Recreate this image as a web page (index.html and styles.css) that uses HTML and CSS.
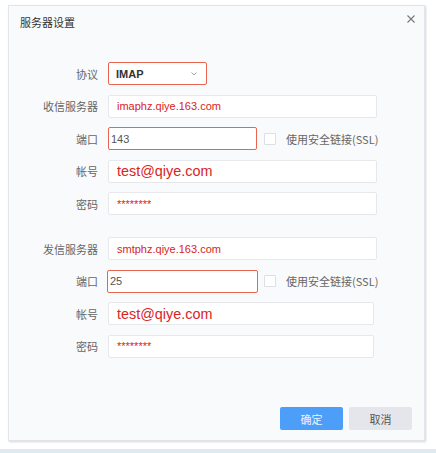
FILE: index.html
```html
<!DOCTYPE html>
<html lang="zh-CN">
<head>
<meta charset="utf-8">
<title>服务器设置</title>
<link rel="stylesheet" href="styles.css">
</head>
<body>
<div class="dialog">
  <div class="dialog-header">
    <span class="dialog-title">服务器设置</span>
    <svg class="close" width="8" height="8" viewBox="0 0 8 8"><path d="M0.5 0.5L7.5 7.5M7.5 0.5L0.5 7.5" stroke="#777" stroke-width="1.1" fill="none"/></svg>
  </div>
  <div class="form">
    <div class="group">
      <div class="row">
        <span class="label">协议</span>
        <div class="select">
          <span class="select-value">IMAP</span>
          <svg class="chevron" width="6" height="4" viewBox="0 0 6 4"><path d="M0.5 0.5L3 3L5.5 0.5" stroke="#999" stroke-width="0.9" fill="none"/></svg>
        </div>
      </div>
      <div class="row">
        <span class="label">收信服务器</span>
        <div class="input wide red-text">imaphz.qiye.163.com</div>
      </div>
      <div class="row">
        <span class="label">端口</span>
        <div class="input port error">143</div>
        <span class="checkbox"></span>
        <span class="check-label">使用安全链接(SSL)</span>
      </div>
      <div class="row">
        <span class="label">帐号</span>
        <div class="input wide red-text big">test@qiye.com</div>
      </div>
      <div class="row">
        <span class="label">密码</span>
        <div class="input wide red-text">********</div>
      </div>
    </div>
    <div class="group">
      <div class="row">
        <span class="label">发信服务器</span>
        <div class="input wide red-text">smtphz.qiye.163.com</div>
      </div>
      <div class="row">
        <span class="label">端口</span>
        <div class="input port port2 error">25</div>
        <span class="checkbox"></span>
        <span class="check-label">使用安全链接(SSL)</span>
      </div>
      <div class="row">
        <span class="label">帐号</span>
        <div class="input wide2 red-text big">test@qiye.com</div>
      </div>
      <div class="row">
        <span class="label">密码</span>
        <div class="input wide2 red-text">********</div>
      </div>
    </div>
  </div>
  <div class="dialog-footer">
    <button class="btn btn-primary">确定</button>
    <button class="btn btn-default">取消</button>
  </div>
</div>
<div class="bottom-strip"></div>
</body>
</html>
```
FILE: styles.css
```css
html, body {
  margin: 0;
  padding: 0;
  background: #ffffff;
}
body {
  font-family: "Noto Sans CJK SC", "Liberation Sans", sans-serif;
  font-size: 11px;
  color: #333;
  width: 436px;
  height: 453px;
  overflow: hidden;
}
.dialog {
  margin: 5px 0 0 8px;
  width: 417px;
  height: 436px;
  box-sizing: border-box;
  border: 1px solid #e2e5ea;
  background: #f9fafc;
  box-shadow: 1px 1px 2px rgba(0, 0, 0, 0.16);
  display: flex;
  flex-direction: column;
}
.dialog-header {
  display: flex;
  justify-content: space-between;
  align-items: flex-start;
  padding: 7px 9px 0 11px;
}
.dialog-title {
  font-size: 11px;
  line-height: 18px;
  color: #333;
}
.close {
  margin-top: 2px;
}
.form {
  margin-top: 31px;
  display: flex;
  flex-direction: column;
  gap: 22px;
}
.group {
  display: flex;
  flex-direction: column;
  gap: 9.5px;
}
.row {
  display: flex;
  align-items: center;
  height: 23px;
}
.label {
  width: 89px;
  margin-right: 10px;
  text-align: right;
  color: #666;
  font-size: 11px;
  white-space: nowrap;
}
.select {
  width: 99px;
  height: 23px;
  box-sizing: border-box;
  border: 1px solid #e8664f;
  border-radius: 2px;
  background: #fff;
  display: flex;
  align-items: center;
  justify-content: space-between;
  padding: 0 9px 0 7px;
}
.select-value {
  font-family: "Liberation Sans", sans-serif;
  font-weight: bold;
  font-size: 11px;
  color: #333;
}
.input {
  height: 23px;
  box-sizing: border-box;
  border: 1px solid #e6e8ec;
  border-radius: 2px;
  background: #fff;
  display: flex;
  align-items: center;
  padding-left: 8px;
  font-family: "Liberation Sans", sans-serif;
  font-size: 11px;
  color: #555;
}
.wide { width: 269px; }
.wide2 { width: 266px; }
.port {
  width: 149px;
  padding-left: 2px;
}
.port2 {
  width: 151px;
  margin-left: -1px;
}
.error {
  border-color: #e8664f;
}
.red-text {
  color: #d92424;
}
.big {
  font-size: 14.4px;
}
.checkbox {
  width: 12px;
  height: 12px;
  box-sizing: border-box;
  border: 1px solid #dcdfe4;
  border-radius: 1px;
  background: #fff;
  margin-left: 7px;
}
.port2 + .checkbox {
  margin-left: 6px;
}
.check-label {
  margin-left: 10px;
  color: #666;
  font-size: 11px;
  white-space: nowrap;
}
.dialog-footer {
  margin-top: auto;
  display: flex;
  justify-content: flex-end;
  gap: 6px;
  padding: 0 12px 10px 0;
}
.btn {
  width: 63px;
  height: 23px;
  border: none;
  border-radius: 2px;
  font-family: "Noto Sans CJK SC", sans-serif;
  font-size: 11px;
  padding: 0;
  cursor: pointer;
}
.btn-primary {
  background: #4c9ef9;
  color: #eef5ff;
}
.btn-default {
  background: #e4e6ec;
  color: #555;
}
.bottom-strip {
  margin-top: 8px;
  height: 5px;
  background: #deeaf1;
}
```
